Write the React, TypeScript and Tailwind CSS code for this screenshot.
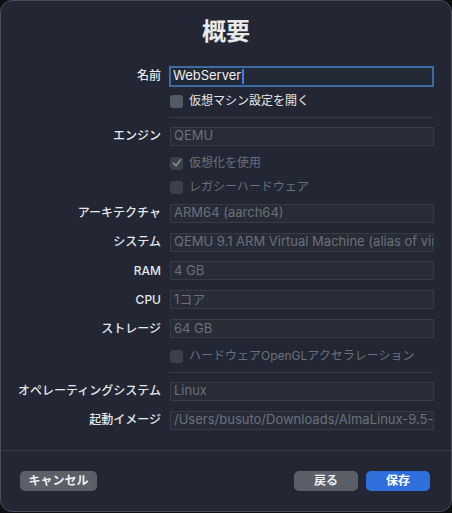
import React from "react";

const font = { fontFamily: '"Inter", "Noto Sans CJK JP", sans-serif' };

const Label: React.FC<{ text: string }> = ({ text }) => (
    <div className="w-[160px] shrink-0 text-right text-[12px] font-medium text-[#e6e7e9]">{text}</div>
);

const Field: React.FC<{ label: string; value: string; h: string }> = ({ label, value, h }) => (
    <div className={`flex items-center ${h}`}>
        <Label text={label} />
        <div className="ml-[9px] flex h-[19px] w-[264px] items-center overflow-hidden whitespace-nowrap border border-[#363b46] bg-[#272c37] px-[3px] text-[13px] text-[#6b7079]">
            {value}
        </div>
    </div>
);

const Check: React.FC<{ text: string; h: string; checked?: boolean; enabled?: boolean }> = ({
    text,
    h,
    checked,
    enabled,
}) => (
    <div className={`flex items-center ${h}`}>
        <div className="w-[160px] shrink-0" />
        <div className="ml-[9px] flex items-center gap-[6px]">
            <div
                className={`flex h-[13px] w-[13px] items-center justify-center rounded-[3px] ${
                    enabled ? "bg-[#545a64]" : "bg-[#3b404a]"
                }`}
            >
                {checked && (
                    <svg width="10" height="10" viewBox="0 0 10 10">
                        <path d="M1.5 5.2 L4 7.8 L8.6 1.8" fill="none" stroke="#8a8f97" strokeWidth="1.6" strokeLinecap="round" strokeLinejoin="round" />
                    </svg>
                )}
            </div>
            <span className={`text-[12px] ${enabled ? "text-[#e6e7e9]" : "text-[#6b7079]"}`}>{text}</span>
        </div>
    </div>
);

const Sep: React.FC<{ h: string }> = ({ h }) => (
    <div className={`flex items-center ${h}`}>
        <div className="ml-[168px] w-[264px] border-t border-[#383d47]" />
    </div>
);

export default function App() {
    return (
        <div className="h-[513px] w-[452px] bg-[#0e0f12]" style={font}>
            <div className="flex h-[512px] w-[452px] flex-col rounded-[12px] border border-[#4a4e56] bg-[#222733]">
                <div className="pt-[17px] text-center text-[24px] font-bold leading-[28px] text-[#e8e9eb]">概要</div>
                <div className="h-[16px]" />
                <div className="flex h-[28px] items-center">
                    <Label text="名前" />
                    <div className="ml-[8px] flex h-[21px] w-[265px] items-center border-[2px] border-[#3d6ca2] bg-[#242936] px-[2px] text-[13px] text-[#f0f0f2]">
                        WebServer
                        <span className="ml-[1px] inline-block h-[15px] w-[2px] bg-[#3b7df0]" />
                    </div>
                </div>
                <Check h="h-[22px]" text="仮想マシン設定を開く" enabled />
                <Sep h="h-[10px]" />
                <Field h="h-[28px]" label="エンジン" value="QEMU" />
                <Check h="h-[26px]" text="仮想化を使用" checked />
                <Check h="h-[22px]" text="レガシーハードウェア" />
                <Field h="h-[30px]" label="アーキテクチャ" value="ARM64 (aarch64)" />
                <Field h="h-[28px]" label="システム" value="QEMU 9.1 ARM Virtual Machine (alias of virt-9.1)" />
                <Field h="h-[29px]" label="RAM" value="4 GB" />
                <Field h="h-[29px]" label="CPU" value="1コア" />
                <Field h="h-[29px]" label="ストレージ" value="64 GB" />
                <Check h="h-[26px]" text="ハードウェアOpenGLアクセラレーション" />
                <Sep h="h-[6px]" />
                <Field h="h-[32px]" label="オペレーティングシステム" value="Linux" />
                <Field h="h-[26px]" label="起動イメージ" value="/Users/busuto/Downloads/AlmaLinux-9.5-aarch64-dvd.iso" />
                <div className="flex-1" />
                <div className="flex h-[61px] items-start border-t border-[#373c46] pl-[19px] pr-[21px] pt-[20px]">
                    <button className="h-[20px] w-[77px] rounded-[5px] bg-[#5a5f68] text-[12px] font-bold text-[#eceef0]">
                        キャンセル
                    </button>
                    <div className="flex-1" />
                    <button className="h-[20px] w-[64px] rounded-[5px] bg-[#5a5f68] text-[12px] font-bold text-[#eceef0]">
                        戻る
                    </button>
                    <button className="ml-[8px] h-[20px] w-[64px] rounded-[5px] bg-[#2f6fdb] text-[12px] font-bold text-white">
                        保存
                    </button>
                </div>
            </div>
        </div>
    );
}
